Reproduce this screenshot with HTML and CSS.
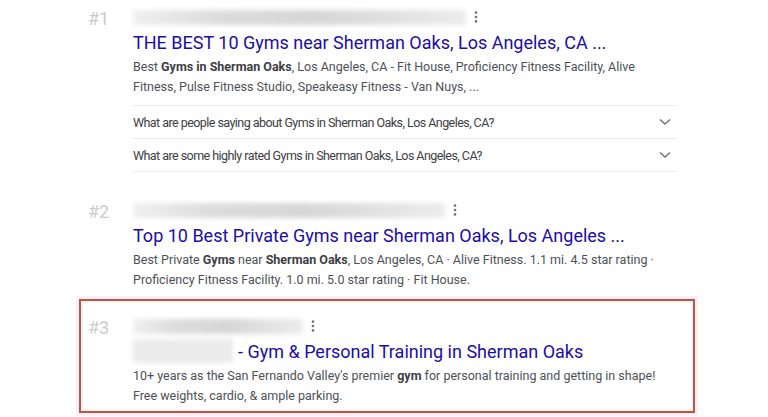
FILE: index.html
```html
<!DOCTYPE html>
<html lang="en">
<head>
    <meta charset="UTF-8">
    <meta name="viewport" content="width=device-width, initial-scale=1.0">
    <title>Gyms near Sherman Oaks</title>
    <link rel="stylesheet" href="styles.css">
</head>
<body>
    <div class="results">
        <div class="result">
            <div class="rank">#1</div>
            <div class="content">
                <div class="head">
                    <div class="blur-url" style="width: 333px"></div>
                    <svg class="kebab" width="4" height="12" viewBox="0 0 4 12"><circle cx="2" cy="1.6" r="1.3"/><circle cx="2" cy="6" r="1.3"/><circle cx="2" cy="10.4" r="1.3"/></svg>
                </div>
                <a class="title" href="#">THE BEST 10 Gyms near Sherman Oaks, Los Angeles, CA ...</a>
                <p class="snippet">Best <b>Gyms in Sherman Oaks</b>, Los Angeles, CA - Fit House, Proficiency Fitness Facility, Alive Fitness, Pulse Fitness Studio, Speakeasy Fitness - Van Nuys, ...</p>
                <div class="questions">
                    <div class="question">
                        <span>What are people saying about Gyms in Sherman Oaks, Los Angeles, CA?</span>
                        <svg class="chevron" width="12" height="8" viewBox="0 0 12 8"><path d="M1 1.5l5 4.5 5-4.5"/></svg>
                    </div>
                    <div class="question">
                        <span>What are some highly rated Gyms in Sherman Oaks, Los Angeles, CA?</span>
                        <svg class="chevron" width="12" height="8" viewBox="0 0 12 8"><path d="M1 1.5l5 4.5 5-4.5"/></svg>
                    </div>
                </div>
            </div>
        </div>

        <div class="result">
            <div class="rank">#2</div>
            <div class="content">
                <div class="head">
                    <div class="blur-url" style="width: 312px"></div>
                    <svg class="kebab" width="4" height="12" viewBox="0 0 4 12"><circle cx="2" cy="1.6" r="1.3"/><circle cx="2" cy="6" r="1.3"/><circle cx="2" cy="10.4" r="1.3"/></svg>
                </div>
                <a class="title" href="#">Top 10 Best Private Gyms near Sherman Oaks, Los Angeles ...</a>
                <p class="snippet">Best Private <b>Gyms</b> near <b>Sherman Oaks</b>, Los Angeles, CA · Alive Fitness. 1.1 mi. 4.5 star rating · Proficiency Fitness Facility. 1.0 mi. 5.0 star rating · Fit House.</p>
            </div>
        </div>

        <div class="result highlighted">
            <div class="rank">#3</div>
            <div class="content">
                <div class="head">
                    <div class="blur-url" style="width: 170px"></div>
                    <svg class="kebab" width="4" height="12" viewBox="0 0 4 12"><circle cx="2" cy="1.6" r="1.3"/><circle cx="2" cy="6" r="1.3"/><circle cx="2" cy="10.4" r="1.3"/></svg>
                </div>
                <a class="title" href="#"><span class="blur-name"></span>- Gym &amp; Personal Training in Sherman Oaks</a>
                <p class="snippet">10+ years as the San Fernando Valley's premier <b>gym</b> for personal training and getting in shape! Free weights, cardio, &amp; ample parking.</p>
            </div>
        </div>
    </div>
</body>
</html>
```

FILE: styles.css
```css
body {
    margin: 0;
    background-color: white;
    font-family: Roboto, "Liberation Sans", Arial, sans-serif;
}
.results {
    width: 616px;
    margin-left: 79px;
}
.result {
    display: flex;
    border: 2px solid transparent;
    padding: 13px 17px 3px 0;
    margin-bottom: 4px;
}
.result:first-child {
    padding-top: 3px;
}
.highlighted {
    padding-bottom: 5px;
    border-color: #b4583f;
    box-shadow: 0 0 0 3px #fdeef9, inset 0 0 0 2px #fdf2fa;
}
.rank {
    width: 45px;
    padding-left: 7px;
    padding-top: 2px;
    font-size: 18px;
    line-height: 24px;
    color: #cbcbcb;
}
.content {
    flex: 1;
}
.head {
    display: flex;
    align-items: center;
    gap: 8px;
    height: 24px;
}
.blur-url {
    height: 15px;
    background: linear-gradient(90deg, #f0f0f0, #dcdcdc 25%, #d6d6d6 55%, #e2e2e2 80%, #ececec);
    filter: blur(2.5px);
}
.kebab {
    fill: #6f7479;
}
.title {
    display: flex;
    align-items: center;
    height: 26px;
    font-size: 18px;
    color: #1a0dab;
    text-decoration: none;
    white-space: nowrap;
}
.blur-name {
    width: 100px;
    height: 24px;
    margin-right: 5px;
    background-color: #ececec;
    filter: blur(2px);
}
.snippet {
    margin: 2px 0 0;
    font-size: 12.5px;
    line-height: 20px;
    color: #4d5156;
}
.snippet b {
    color: #3c4043;
}
.questions {
    margin-top: 8px;
    margin-bottom: 2px;
    border-top: 1px solid #ebebeb;
}
.question {
    display: flex;
    align-items: center;
    justify-content: space-between;
    height: 32px;
    padding-right: 5px;
    border-bottom: 1px solid #ebebeb;
    font-size: 12.5px;
    letter-spacing: -0.55px;
    color: #3c4043;
}
.chevron {
    fill: none;
    stroke: #70757a;
    stroke-width: 1.5;
}
```
